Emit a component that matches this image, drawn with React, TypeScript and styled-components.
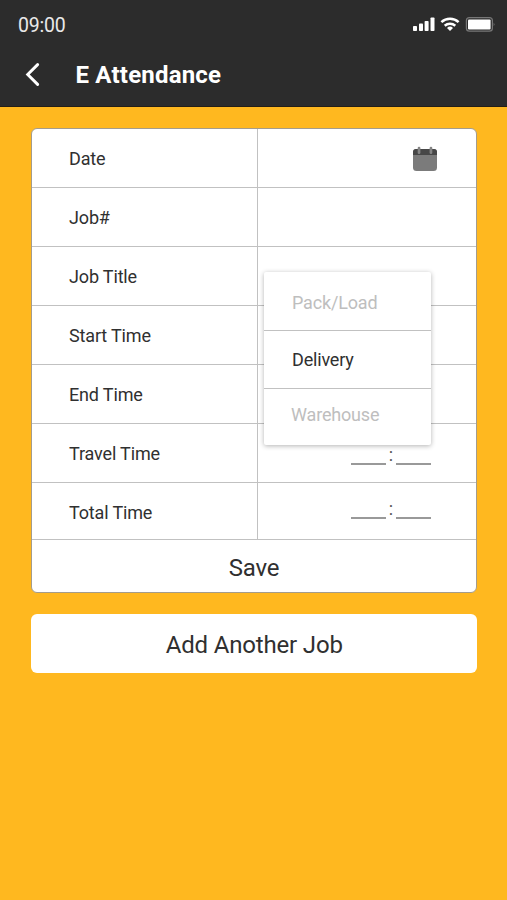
import React from "react";
import styled, { createGlobalStyle } from "styled-components";

const GlobalStyle = createGlobalStyle`
  * { box-sizing: border-box; }
  body { margin: 0; background: #ffb81f; }
`;

const Screen = styled.main`
  width: 507px;
  height: 900px;
  overflow: hidden;
  background: #ffb81f;
  color: #303030;
  font-family: Roboto, sans-serif;
`;

const Header = styled.header`
  height: 107px;
  background: #2c2c2c;
  border-bottom: 1px solid #241f17;
  color: #fff;
`;

const StatusBar = styled.div`
  display: flex;
  justify-content: space-between;
  height: 48px;
  padding: 0 11px 0 18px;
`;

const Clock = styled.span`
  font-size: 19.5px;
  line-height: 51px;
  letter-spacing: -0.2px;
  color: #e9e9e9;
`;

const StatusIcons = styled.svg`
  margin-top: 13px;
`;

const TitleBar = styled.div`
  display: flex;
  align-items: center;
  height: 54px;
`;

const BackButton = styled.button`
  display: flex;
  width: 75.5px;
  padding: 0 0 0 25px;
  border: 0;
  background: none;
`;

const Title = styled.h1`
  margin: 0;
  font-size: 24px;
  line-height: 54px;
  font-weight: 700;
  letter-spacing: 0.2px;
`;

const Content = styled.div`
  padding: 21px 30px 0 31px;
`;

const Card = styled.section`
  height: 465px;
  border: 1px solid #a49c8b;
  border-radius: 6px;
  background: #fff;
`;

const Row = styled.div<{ $height?: number }>`
  display: grid;
  grid-template-columns: 224.5px 1fr;
  grid-template-rows: 100%;
  height: ${(p) => p.$height ?? 59}px;
  border-bottom: 1px solid #c1c1c1;
`;

const Label = styled.div`
  padding-left: 37px;
  font-size: 18px;
  line-height: 59px;
  letter-spacing: -0.15px;
  white-space: nowrap;
`;

const Value = styled.div<{ $top?: number }>`
  position: relative;
  display: flex;
  justify-content: flex-end;
  align-items: flex-start;
  padding: ${(p) => p.$top ?? 0}px 45px 0 0;
  border-left: 1px solid #c1c1c1;
`;

const CalendarIcon = styled.svg`
  margin-right: -7px;
`;

const Blanks = styled.div`
  display: flex;
  align-items: flex-end;
  height: 15px;
`;

const Blank = styled.span`
  width: 35px;
  height: 2px;
  background: #999;
`;

const Colon = styled.span`
  width: 10px;
  font-size: 18px;
  line-height: 21px;
  text-align: center;
  color: #555;
`;

const Menu = styled.div`
  position: absolute;
  z-index: 1;
  top: 25px;
  left: 6.5px;
  width: 167px;
  height: 173px;
  border-radius: 2px;
  background: #fff;
  box-shadow: 0 1px 5px rgba(0, 0, 0, 0.3);
`;

const Option = styled.div<{ $height: number; $line: number; $left?: number; $active?: boolean }>`
  height: ${(p) => p.$height}px;
  padding-left: ${(p) => p.$left ?? 28}px;
  border-bottom: 1px solid #c1c1c1;
  font-size: 18px;
  line-height: ${(p) => p.$line}px;
  letter-spacing: -0.17px;
  color: ${(p) => (p.$active ? "#303030" : "#bebebe")};
  &:last-child { border-bottom: 0; }
`;

const SaveButton = styled.button`
  display: block;
  width: 100%;
  height: 52px;
  padding: 4px 0 0;
  border: 0;
  background: none;
  color: inherit;
  font: 24px Roboto, sans-serif;
  letter-spacing: -0.17px;
`;

const AddButton = styled.button`
  display: block;
  width: 446.5px;
  height: 59px;
  margin: 21px 0 0 -0.5px;
  padding: 2px 0 0 1px;
  border: 0;
  border-radius: 6px;
  background: #fff;
  color: inherit;
  font: 24px Roboto, sans-serif;
  letter-spacing: -0.17px;
`;

const TimeBlank = () => (
  <Blanks>
    <Blank />
    <Colon>:</Colon>
    <Blank />
  </Blanks>
);

export default function App() {
  return (
    <Screen>
      <GlobalStyle />
      <Header>
        <StatusBar>
          <Clock>09:00</Clock>
          <StatusIcons width="84" height="22" viewBox="0 0 84 22" fill="#fff">
            <rect x="1" y="13" width="4" height="5" rx="0.8" />
            <rect x="7" y="10.5" width="4" height="7.5" rx="0.8" />
            <rect x="12.6" y="8" width="4" height="10" rx="0.8" />
            <rect x="18.5" y="4.5" width="4" height="13.5" rx="0.8" />
            <g fill="none" stroke="#fff" strokeWidth="2.5">
              <path d="M29.4 9.2a12.6 12.6 0 0 1 17.2 0" />
              <path d="M32.7 12.8a8 8 0 0 1 10.6 0" />
            </g>
            <path d="M38 18l-3-3.1a4.5 4.5 0 0 1 6 0z" />
            <rect x="54.4" y="4.6" width="26" height="13.6" rx="3" fill="none" stroke="#777" strokeWidth="1.2" />
            <rect x="56" y="6.4" width="22.6" height="10.2" rx="1" />
            <path d="M81.7 9.5q1.8 1.9 0 3.8z" fill="#777" />
          </StatusIcons>
        </StatusBar>
        <TitleBar>
          <BackButton aria-label="Back">
            <svg width="16" height="24" viewBox="0 0 16 24" fill="none" stroke="#fff" strokeWidth="2.9" strokeLinecap="round" strokeLinejoin="miter">
              <path d="M12.6 1.6L2.7 11.5l9.9 9.9" />
            </svg>
          </BackButton>
          <Title>E Attendance</Title>
        </TitleBar>
      </Header>
      <Content>
        <Card>
          <Row>
            <Label>Date</Label>
            <Value $top={17}>
              <CalendarIcon width="26" height="26" viewBox="0 0 26 26">
                <rect x="1" y="3" width="24" height="22" rx="3.5" fill="#7b7b7b" />
                <path d="M1 9V6a3 3 0 0 1 3-3h18a3 3 0 0 1 3 3v3z" fill="#474747" />
                <rect x="5.7" y="0.8" width="2.7" height="7.2" rx="1.3" fill="#858585" />
                <rect x="17.6" y="0.8" width="2.7" height="7.2" rx="1.3" fill="#858585" />
              </CalendarIcon>
            </Value>
          </Row>
          <Row>
            <Label>Job#</Label>
            <Value />
          </Row>
          <Row>
            <Label>Job Title</Label>
            <Value>
              <Menu>
                <Option $height={59} $line={61}>Pack/Load</Option>
                <Option $height={58} $line={57} $active>Delivery</Option>
                <Option $height={56} $line={52} $left={27}>Warehouse</Option>
              </Menu>
            </Value>
          </Row>
          <Row>
            <Label>Start Time</Label>
            <Value />
          </Row>
          <Row>
            <Label>End Time</Label>
            <Value />
          </Row>
          <Row>
            <Label>Travel Time</Label>
            <Value $top={26}>
              <TimeBlank />
            </Value>
          </Row>
          <Row $height={57}>
            <Label>Total Time</Label>
            <Value $top={21}>
              <TimeBlank />
            </Value>
          </Row>
          <SaveButton>Save</SaveButton>
        </Card>
        <AddButton>Add Another Job</AddButton>
      </Content>
    </Screen>
  );
}
